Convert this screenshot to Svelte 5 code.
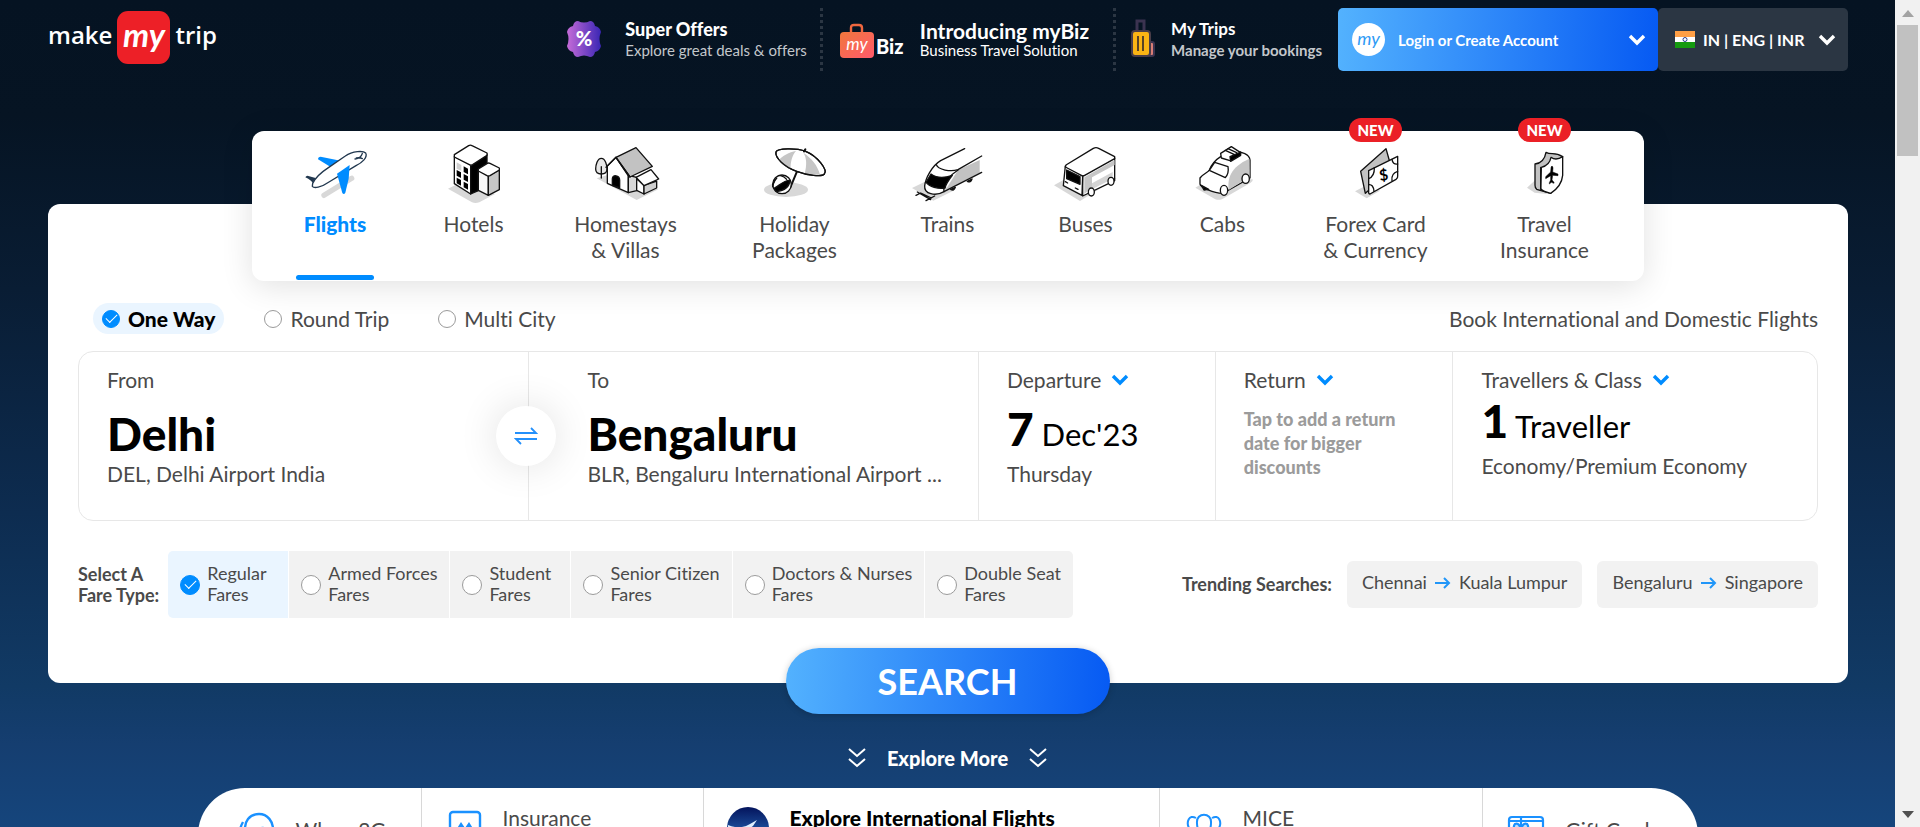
<script>
  let trip = $state('One Way');
  let fare = $state('Regular');
  let from = $state('Delhi');
  let to = $state('Bengaluru');

  const trips = ['One Way', 'Round Trip', 'Multi City'];
  const fares = ['Regular', 'Armed Forces', 'Student', 'Senior Citizen', 'Doctors & Nurses', 'Double Seat'];
  const trends = [['Chennai', 'Kuala Lumpur'], ['Bengaluru', 'Singapore']];
  const tabs = [
    { id: 'flights', lines: ['Flights'], box: '180 66 210 186', active: true },
    { id: 'hotels', lines: ['Hotels'], box: '597 66 210 186' },
    { id: 'homes', lines: ['Homestays', '& Villas'], box: '1053 66 210 186' },
    { id: 'holiday', lines: ['Holiday', 'Packages'], box: '180 66 210 186' },
    { id: 'trains', lines: ['Trains'], box: '639 66 210 186' },
    { id: 'buses', lines: ['Buses'], box: '1053 66 210 186' },
    { id: 'cabs', lines: ['Cabs'], box: '84 96 210 186' },
    { id: 'forex', lines: ['Forex Card', '& Currency'], box: '543 96 210 186', isNew: true },
    { id: 'insurance', lines: ['Travel', 'Insurance'], box: '1050 96 210 186', isNew: true }
  ];

  function swap() {
    [from, to] = [to, from];
  }
</script>

{#snippet chevron()}
  <svg class="chevron" viewBox="0 0 18 12" width="18" height="12" aria-hidden="true"><path d="M2 2l7 7 7-7" fill="none" stroke="currentColor" stroke-width="3.4" /></svg>
{/snippet}

{#snippet down()}
  <svg viewBox="0 0 20 20" width="20" height="20" aria-hidden="true"><path d="M2 1l8 7 8-7M2 11l8 7 8-7" fill="none" stroke="#fff" stroke-width="2" /></svg>
{/snippet}

{#snippet picture(id)}
  {#if id === 'flights'}
    <path d="M252 226L335 175" stroke="#d8d8d8" stroke-width="16" />
    <path d="M234 118q0-8 8-8l52 11 8 6-30 14z" fill="#008cff" stroke="none" />
    <path d="M196 172q3-6 9-4l30 8-14 17q-6-12-25-21z" fill="#22384f" stroke="none" />
    <path d="M218 190C228 170 242 158 262 145L316 108C338 92 370 92 377 99C384 112 366 128 348 137L262 189C244 202 222 206 217 199Z" fill="#fff" stroke="#22384f" />
    <path d="M345 117q18-2 22-17M349 114q12-2 18 2" fill="none" stroke="#22384f" />
    <path d="M291 161L329 135L326 176L316 218q-4 7-9 1z" fill="#008cff" stroke="none" />
  {:else if id === 'hotels'}
    <path d="M624 206L660 188L765 222L718 247q-12 4-22 0z" fill="#d8d8d8" stroke="none" />
    <path d="M643 110L692 135V222L643 191Z" fill="#fff" />
    <path d="M692 135L741 102V132L715 148V212L692 222Z" fill="#000" />
    <path d="M643 104L686 77q5-3 10 0L741 99v7L698 134q-5 3-10 0L643 111Z" fill="#fff" />
    <path d="M650 127l14 8v17l-14-6z" fill="#d0d0d0" stroke="none" />
    <path d="M671 139l13 7v17l-13-7zM650 150l13 7v17l-13-7zM671 162l13 7v17l-13-7zM650 173l13 7v17l-13-7zM671 185l13 7v17l-13-7z" fill="#000" stroke="none" />
    <path d="M715 150L745 168V226L715 211Z" fill="#f8f8f8" />
    <path d="M745 168L778 150V209L745 226Z" fill="#c6c6c6" />
    <path d="M715 147L742 130q4-2 8 0L778 144v6L750 167q-5 2-9 0L715 153Z" fill="#fff" />
  {:else if id === 'homes'}
    <path d="M1070 175L1100 166L1255 208L1190 240Z" fill="#d8d8d8" stroke="none" />
    <path d="M1084 115c-12 0-17 20-17 32 0 11 8 15 17 15s17-4 17-15c0-12-5-32-17-32z" fill="#e6e6e6" />
    <path d="M1084 140v34" />
    <path d="M1102 190V138L1128 112L1165 168V218Z" fill="#fff" />
    <path d="M1165 166L1190 172V212L1165 218Z" fill="#d8d8d8" />
    <path d="M1128 112L1188 83L1237 139L1170 171Z" fill="#c2c2c2" />
    <path d="M1098 142L1128 112L1170 171" fill="none" />
    <path d="M1117 196v-20c0-14 22-10 22 4v23z" fill="#000" />
    <path d="M1190 176L1212 196V222L1190 211Z" fill="#fff" />
    <path d="M1212 196L1250 183V204L1212 222Z" fill="#cfcfcf" />
    <path d="M1188 172L1233 149L1256 177L1212 197Z" fill="#fff" />
  {:else if id === 'holiday'}
    <ellipse cx="258" cy="209" rx="66" ry="22" fill="#d8d8d8" stroke="none" />
    <path d="M292 152L272 200" stroke-width="6" />
    <path d="M228 96C232 84 290 84 317 94C352 108 384 150 373 162C366 172 322 166 290 154C252 140 224 112 228 96Z" fill="#fff" />
    <path d="M236 121C246 108 268 96 288 93C276 106 271 128 272 147C257 140 244 131 236 121ZM310 98C334 114 353 136 360 164C344 165 328 163 314 160C321 136 320 112 310 98Z" fill="#c6c6c6" stroke="none" />
    <path d="M228 96C232 84 290 84 317 94C352 108 384 150 373 162C366 172 322 166 290 154C252 140 224 112 228 96Z" fill="none" />
    <path d="M312 94L316 88" stroke-width="6" />
    <circle cx="246" cy="193" r="28" fill="#fff" />
    <path d="M222 205C238 198 250 180 270 181C268 202 252 212 229 215ZM218 200q2-18 12-25" fill="#000" />
    <path d="M240 166q14 4 20 12" fill="none" />
  {:else if id === 'trains'}
    <path d="M636 204L690 178L760 212L700 242Z" fill="#d8d8d8" stroke="none" />
    <path d="M648 226l14-7M664 220l30 14M678 242l26-14M652 216l40 23" />
    <path d="M774 150L839 120V158L734 214Z" fill="#c2c2c2" stroke="none" />
    <path d="M794 86L722 122C695 138 676 176 674 198C672 222 706 230 732 215C728 190 752 164 774 150" fill="#fff" />
    <path d="M693 162C712 176 740 172 757 166C746 180 738 192 735 204C714 208 688 200 678 187Z" fill="#000" />
    <path d="M709 134C714 150 752 156 774 149L845 108M732 215L845 157" fill="none" />
    <path d="M752 208q10 6 14-6zM802 184q10 5 14-7z" fill="#000" />
  {:else if id === 'buses'}
    <path d="M1062 196L1090 180L1250 175L1140 243Z" fill="#d8d8d8" stroke="none" />
    <path d="M1148 168L1244 114V182L1148 228Z" fill="#fff" />
    <path d="M1153 172L1244 120V135L1176 172V200L1153 222Z" fill="#c6c6c6" stroke="none" />
    <path d="M1176 190L1238 156V176L1176 208Z" fill="#d4d4d4" stroke="none" />
    <path d="M1096 138L1148 168L1146 226L1090 197Z" fill="#fff" />
    <path d="M1100 150L1140 170V193L1100 176Z" fill="#000" />
    <path d="M1098 135L1180 85q8-4 16 0L1244 110v6L1154 166q-5 3-10 0L1096 141Z" fill="#fff" />
    <path d="M1096 185l7 4M1126 204l8 4" />
    <ellipse cx="1174" cy="216" rx="9" ry="12" fill="#fff" /><ellipse cx="1233" cy="184" rx="9" ry="12" fill="#fff" />
  {:else if id === 'cabs'}
    <path d="M106 233L140 212L278 208q2 6-6 10L186 268q-10 3-20 0z" fill="#d8d8d8" stroke="none" />
    <path d="M120 204C130 190 144 188 148 180C154 166 166 150 182 140L210 124C240 124 268 130 270 150V204L188 250C160 250 122 232 120 222Z" fill="#fff" />
    <path d="M206 240C202 206 210 172 268 146L269 200Z" fill="#c6c6c6" stroke="none" />
    <path d="M148 181L164 157L204 170C206 182 204 194 196 203Z" fill="#fff" />
    <path d="M182 130L214 110L242 128L210 152L184 144Z" fill="#fff" />
    <path d="M210 140L242 126V136L212 154ZM196 121l26 12M204 116l26 12" fill="#000" />
    <path d="M124 226l22 12-14 2z" fill="#000" />
    <ellipse cx="192" cy="241" rx="11" ry="15" fill="#fff" /><ellipse cx="257" cy="206" rx="11" ry="14" fill="#fff" />
  {:else if id === 'forex'}
    <path d="M585 244L620 226L660 242L620 265Z" fill="#d8d8d8" stroke="none" />
    <path d="M602 184L678 116L696 180L616 250Z" fill="#c2c2c2" />
    <path d="M626 182L713 139V198Q714 204 708 208L630 252Q625 252 626 245Z" fill="#fff" />
    <path d="M626 206q18-8 17-33M696 148q2 16 17 14M626 224q14-2 16 20M713 184q-20 6-17 28" fill="none" />
    <text x="671" y="211" font-size="46" font-weight="700" text-anchor="middle" fill="#000" stroke="none" transform="rotate(-8 671 195)">$</text>
  {:else}
    <path d="M1101 233L1126 210L1180 236L1160 252L1124 248Z" fill="#d8d8d8" stroke="none" />
    <path d="M1125 162C1142 160 1154 150 1158 127C1174 136 1184 124 1208 140L1172 250L1130 238Q1125 234 1125 226Z" fill="#c2c2c2" />
    <path d="M1144 172C1160 168 1170 158 1173 142C1184 150 1196 148 1208 140V196C1206 218 1190 238 1172 250C1156 246 1144 240 1142 236Z" fill="#fff" />
    <path d="M1142 172V238" />
    <path d="M1174 170q5-4 5 4l-1 12 16 6v5l-16-1-2 14 6 7v3l-8-3-6 5v-4l4-8v-13l-15 9v-6l15-14 1-12q0-3 1-4z" fill="#000" stroke="#000" stroke-width="1.5" />
  {/if}
{/snippet}

<div class="window">
  <div class="page">
    <header class="wrap top">
      <a class="logo" href="#home" aria-label="makemytrip">
        <span>make</span><b>my</b><span>trip</span>
      </a>
      <div class="links">
        <a class="promo offers" href="#offers">
          <svg viewBox="0 0 36 38" width="36" height="38" aria-hidden="true">
            <defs><linearGradient id="violet"><stop stop-color="#c56bd8" /><stop offset="1" stop-color="#3a26b4" /></linearGradient></defs>
            <path d="M12 1q6 3 12 0 4 0 5 5 5 1 6 6-3 7 0 14-1 5-6 6-1 5-5 5-6-3-12 0-4 0-5-5-5-1-6-6 3-7 0-14 1-5 6-6 1-5 5-5z" fill="url(#violet)" />
            <text x="18" y="26" font-size="20" font-weight="900" text-anchor="middle" fill="#fff">%</text>
          </svg>
          <span><strong>Super Offers</strong><small>Explore great deals &amp; offers</small></span>
        </a>
        <a class="promo biz" href="#mybiz">
          <svg viewBox="0 0 66 36" width="66" height="36" aria-hidden="true">
            <defs><linearGradient id="coral" x2="1" y2="1"><stop stop-color="#f0773c" /><stop offset="1" stop-color="#ff5a6c" /></linearGradient></defs>
            <path d="M12 10V5q0-3 3-3h5q3 0 3 3v5" fill="none" stroke="#f0673f" stroke-width="2.4" />
            <rect x="1" y="9" width="34" height="26" rx="4" fill="url(#coral)" />
            <text x="18" y="27" font-size="17" font-style="italic" text-anchor="middle" fill="#fff">my</text>
            <text x="37" y="31" font-size="20" font-weight="900" fill="#fff">Biz</text>
          </svg>
          <span><strong>Introducing myBiz</strong><small>Business Travel Solution</small></span>
        </a>
        <a class="promo trips" href="#trips">
          <svg viewBox="0 0 26 40" width="26" height="40" aria-hidden="true">
            <path d="M7 12V2h7v10" fill="none" stroke="#3b3350" stroke-width="3" />
            <rect x="18" y="23" width="6" height="14" rx="2" fill="#d97d75" stroke="#3b3350" stroke-width="2" />
            <rect x="2" y="12" width="18" height="25" rx="3" fill="#fbb414" stroke="#4a3d48" stroke-width="2" />
            <path d="M8 17v15M13 17v15" stroke="#5a4325" stroke-width="2" />
          </svg>
          <span><strong>My Trips</strong><small>Manage your bookings</small></span>
        </a>
        <button class="login"><i>my</i><span>Login or Create Account</span>{@render chevron()}</button>
        <button class="locale">
          <svg viewBox="0 0 20 17" width="20" height="17" aria-hidden="true"><path d="M0 0h20v17H0z" fill="#fff" /><path d="M0 0h20v6H0z" fill="#ff9f45" /><path d="M0 11h20v6H0z" fill="#159a10" /><circle cx="10" cy="8.500" r="2" fill="none" stroke="#253a8e" /></svg>
          <span>IN | ENG | INR</span>{@render chevron()}
        </button>
      </div>
    </header>

    <nav class="tabs" aria-label="Services">
      {#each tabs as tab}
        <a class="tab" class:active={tab.active} href={'#' + tab.id}>
          {#if tab.isNew}<em>NEW</em>{/if}
          <svg class="pic" viewBox={tab.box} width="70" height="62" aria-hidden="true">{@render picture(tab.id)}</svg>
          {#each tab.lines as line}<span>{line}</span>{/each}
        </a>
      {/each}
    </nav>

    <main class="wrap card">
      <div class="trip-row">
        <div class="trips-set">
          {#each trips as name}
            <label class="trip" class:on={trip === name}><input type="radio" name="trip" value={name} bind:group={trip} />{name}</label>
          {/each}
        </div>
        <p>Book International and Domestic Flights</p>
      </div>

      <div class="fields">
        <div class="field city">
          <label for="from">From</label>
          <input id="from" type="text" bind:value={from} />
          <p>DEL, Delhi Airport India</p>
          <button class="swap" aria-label="Swap cities" onclick={swap}>
            <svg viewBox="0 0 24 18" width="24" height="18" aria-hidden="true"><path d="M1 6h21l-5-5M23 12H2l5 5" fill="none" stroke="#2490fb" stroke-width="1.8" /></svg>
          </button>
        </div>
        <div class="field city second">
          <label for="to">To</label>
          <input id="to" type="text" bind:value={to} />
          <p>BLR, Bengaluru International Airport ...</p>
        </div>
        <button class="field">
          <span class="name">Departure {@render chevron()}</span>
          <span class="value"><b>7</b> Dec'23</span>
          <span>Thursday</span>
        </button>
        <button class="field">
          <span class="name">Return {@render chevron()}</span>
          <span class="hint">Tap to add a return date for bigger discounts</span>
        </button>
        <button class="field guests">
          <span class="name">Travellers &amp; Class {@render chevron()}</span>
          <span class="value"><b>1</b> Traveller</span>
          <span>Economy/Premium Economy</span>
        </button>
      </div>

      <div class="fare-row">
        <strong>Select A<br />Fare Type:</strong>
        <div class="fares">
          {#each fares as name}
            <label class:on={fare === name}><input type="radio" name="fare" value={name} bind:group={fare} /><span>{name}<br />Fares</span></label>
          {/each}
        </div>
        <div class="trend">
          <strong>Trending Searches:</strong>
          {#each trends as pair}
            <a href="#search">{pair[0]}
              <svg viewBox="0 0 16 12" width="16" height="12" aria-hidden="true"><path d="M0 6h14M9 1l5 5-5 5" fill="none" stroke="#2196f8" stroke-width="2" /></svg>
              {pair[1]}</a>
          {/each}
        </div>
      </div>
    </main>

    <button class="search">SEARCH</button>

    <div class="more">{@render down()}<span>Explore More</span>{@render down()}</div>

    <div class="bar">
      <a class="mid" href="#where2go">
        <svg viewBox="0 0 38 38" width="38" height="38" fill="none" stroke="#1a91ff" stroke-width="2.400" aria-hidden="true"><path d="M6 10Q0 20 5 34M9 24C5 8 14 2 22 2S37 9 36 20 28 37 21 36 10 30 9 24zM20 18q6-4 11 0" /></svg>
        <span>Where2Go</span>
      </a>
      <a href="#insurance">
        <svg viewBox="0 0 34 38" width="34" height="38" fill="none" stroke="#1a91ff" stroke-width="2.400" aria-hidden="true"><rect x="2" y="2" width="30" height="34" rx="3" /><path d="M8 20l5-8 4 6 4-6 5 8v6H8z" fill="#1a91ff" stroke="none" /></svg>
        <span>Insurance</span>
      </a>
      <a class="strong" href="#international">
        <svg viewBox="0 0 42 42" width="42" height="42" aria-hidden="true"><defs><linearGradient id="sky" x2="0" y2="1"><stop stop-color="#04145c" /><stop offset="1" stop-color="#2f7fd0" /></linearGradient></defs><circle cx="21" cy="21" r="21" fill="url(#sky)" /><path d="M1 18q12 5 22-1l7-4-4 6Q14 28 1 27z" fill="#dfefff" /></svg>
        <span>Explore International Flights</span>
      </a>
      <a href="#mice">
        <svg viewBox="0 0 36 34" width="36" height="34" fill="none" stroke="#1a91ff" stroke-width="2" aria-hidden="true"><path d="M11 13C10 2 26 2 25 13q0 6-3 9v6H14v-6q-3-3-3-9zM10 8C3 4 0 12 3 18v4l-3 5h11M26 8c7-4 10 4 7 10v4l3 5H25" /></svg>
        <span>MICE</span>
      </a>
      <a class="mid" href="#gift">
        <svg viewBox="0 0 38 30" width="38" height="30" fill="#fff" stroke="#1a91ff" stroke-width="2.200" aria-hidden="true"><rect x="2" y="2" width="34" height="26" rx="3" /><path d="M2 6h34M14 2v26M2 18h34" /><path d="M14 17Q4 14 8 9q5-2 6 8 1-10 6-8 4 5-6 8z" fill="#bfe0ff" /></svg>
        <span>Gift Cards</span>
      </a>
    </div>
  </div>

  <div class="scroll" aria-hidden="true">
    <svg viewBox="0 0 12 8" width="12" height="8"><path d="M0 8l6-7 6 7z" fill="#a3a3a3" /></svg>
    <div class="thumb"></div>
    <svg viewBox="0 0 12 8" width="12" height="8"><path d="M0 0l6 7 6-7z" fill="#505050" /></svg>
  </div>
</div>

<style>
  :global(body) { margin: 0; overflow: hidden; }
  * { box-sizing: border-box; }
  .window {
    display: grid;
    grid-template-columns: 1fr 25px;
    height: 100vh;
    overflow: hidden;
    font-family: Lato, "Open Sans", sans-serif;
    font-size: 21px;
    line-height: 26px;
    font-variant-ligatures: none;
    color: #4a4a4a;
  }
  button, input { font: inherit; color: inherit; border: 0; background: none; padding: 0; margin: 0; }
  button { cursor: pointer; text-align: left; }
  a { color: inherit; text-decoration: none; }
  p { margin: 0; }
  .page {
    min-width: 0;
    overflow: hidden;
    display: flex;
    flex-direction: column;
    background: linear-gradient(#051322, #061423 14%, #091d34 35%, #0d2c50 62%, #113a65 83%, #153e70 90%, #15457c);
  }
  .wrap { margin: 0 47px 0 48px; flex: none; }

  .top { display: flex; justify-content: space-between; padding-top: 8px; height: 71px; color: #fff; }
  .logo { display: flex; align-items: center; gap: 5px; height: 58px; font: 600 24px/36px "Open Sans", sans-serif; }
  .logo span { padding-bottom: 4px; }
  .logo b {
    width: 53px;
    height: 53px;
    border-radius: 11px;
    background: #ed2027;
    font: italic 700 33px/46px Lato, sans-serif;
    text-align: center;
  }
  .links { display: flex; height: 63px; }
  .promo { display: flex; align-items: center; padding-bottom: 2px; }
  .promo span { display: flex; flex-direction: column; }
  .promo strong { font-size: 18px; line-height: 22px; font-weight: 900; }
  .promo small { font-size: 15px; line-height: 20px; color: #c3c7cb; }
  .offers { gap: 23px; padding-right: 13px; }
  .biz { gap: 15px; padding: 2px 24px 0 16px; border: 3px none #2b3643; border-style: none dotted; }
  .biz strong { font-size: 21px; font-weight: 700; line-height: 18px; }
  .biz small { color: #fff; }
  .trips { gap: 15px; padding: 0 16px 2px 14px; }
  .trips strong { font-size: 17px; font-weight: 700; }
  .trips small { font-weight: 700; }
  .login, .locale { display: flex; align-items: center; border-radius: 5px; font-weight: 700; color: #fff; }
  .login { width: 320px; padding: 0 12px 0 14px; gap: 13px; font-size: 15px; background: linear-gradient(93deg, #53b2fe, #065af3); }
  .login i { width: 33px; height: 33px; border-radius: 50%; background: #fff; color: #2f9bf5; text-align: center; font-size: 18px; font-weight: 400; line-height: 30px; }
  .login span { flex: 1; }
  .locale { width: 190px; padding: 0 12px 0 17px; gap: 8px; font-size: 16px; background: #2b3643; }
  .locale span { flex: 1; white-space: nowrap; }

  .tabs {
    position: relative;
    z-index: 2;
    flex: none;
    align-self: center;
    width: 1392px;
    max-width: 96%;
    height: 150px;
    margin: 60px 0 -77px;
    padding: 11px 18px 0 15px;
    display: grid;
    grid-template-columns: 137fr 140fr 164fr 174fr 132fr 144fr 130fr 176fr 162fr;
    background: #fff;
    border-radius: 12px;
    box-shadow: 0 5px 32px rgba(0, 0, 0, .12);
  }
  .tab { position: relative; display: flex; flex-direction: column; align-items: center; }
  .pic { margin-bottom: 7px; overflow: visible; stroke: #111; stroke-width: 4; stroke-linecap: round; stroke-linejoin: round; }
  .tab.active { color: #008cff; font-weight: 900; }
  .tab.active::after { content: ""; position: absolute; bottom: 1px; width: 78px; height: 5px; border-radius: 3px; background: #008cff; }
  .tab em {
    position: absolute;
    top: -24px;
    width: 53px;
    height: 24px;
    border-radius: 12px;
    background: #eb2026;
    color: #fff;
    font: 900 15px/24px Lato, sans-serif;
    text-align: center;
  }

  .card { background: #fff; border-radius: 12px; padding: 99px 30px 65px; }
  .trip-row { display: flex; justify-content: space-between; align-items: center; height: 31px; }
  .trips-set { display: flex; gap: 31px; margin-left: 15px; }
  .trip { display: flex; align-items: center; gap: 8px; height: 31px; padding: 0 9px; border-radius: 16px; }
  .trip.on { background: #eaf5ff; color: #000; font-weight: 900; }
  input[type="radio"] { appearance: none; flex: none; width: 18px; height: 18px; border: 1px solid #9b9b9b; border-radius: 50%; background: #fff; }
  input[type="radio"]:checked { border-color: #008cff; background: #008cff; display: grid; place-items: center; }
  input[type="radio"]:checked::before { content: ""; width: 10px; height: 5px; border: solid #fff; border-width: 0 0 1px 1px; rotate: -45deg; margin-bottom: 3px; }

  .fields {
    display: grid;
    grid-template-columns: 450fr 450fr 237fr 238fr 365fr;
    height: 170px;
    margin-top: 17px;
    border: 1px solid #e7e7e7;
    border-radius: 15px;
  }
  .field { position: relative; min-width: 0; display: flex; flex-direction: column; justify-content: flex-start; padding: 15px 28px 0; border-left: 1px solid #e7e7e7; }
  .field:first-child { border: 0; }
  .second { padding-left: 58px; }
  .field p { white-space: nowrap; }
  .city input { width: 100%; height: 54px; margin-top: 14px; font-size: 46px; font-weight: 900; color: #000; line-height: 54px; outline: 0; }
  .swap {
    position: absolute;
    z-index: 1;
    right: -28px;
    top: 54px;
    width: 60px;
    height: 60px;
    display: grid;
    place-items: center;
    border-radius: 50%;
    background: #fff;
    box-shadow: 0 0 40px rgba(0, 0, 0, .12);
  }
  .name { display: flex; align-items: center; gap: 10px; }
  .name .chevron { color: #008cff; }
  .value { margin: 9px 0 6px; font-size: 31px; line-height: 54px; height: 53px; color: #000; }
  .value b { font-size: 46px; font-weight: 900; }
  .guests .value { margin-top: 1px; }
  .hint { margin-top: 14px; max-width: 165px; font-size: 18px; font-weight: 900; line-height: 24px; color: #9b9b9b; }

  .fare-row { display: flex; align-items: center; height: 67px; margin-top: 30px; font-size: 18px; line-height: 21px; white-space: nowrap; }
  .fares { display: flex; gap: 1px; height: 67px; margin-left: 9px; border-radius: 5px; overflow: hidden; }
  .fares label { display: flex; align-items: center; gap: 7px; min-width: 120px; padding: 0 12px; background: #f2f2f2; }
  .fares label.on { background: #eaf5ff; }
  .fares span { padding-bottom: 2px; }
  .fares input[type="radio"] { width: 20px; height: 20px; }
  .trend { display: flex; align-items: center; gap: 15px; margin-left: auto; }
  .trend a { display: flex; align-items: center; gap: 8px; height: 47px; padding: 0 15px 4px; border-radius: 6px; background: #f2f2f2; }

  .search {
    position: relative;
    flex: none;
    align-self: center;
    width: 324px;
    height: 66px;
    margin-top: -35px;
    border-radius: 33px;
    background: linear-gradient(93deg, #53b2fe, #065af3);
    box-shadow: 0 1px 7px rgba(0, 0, 0, .2);
    color: #fff;
    font-size: 36px;
    font-weight: 700;
    text-align: center;
  }
  .more { flex: none; display: flex; justify-content: center; align-items: center; gap: 20px; height: 26px; margin: 31px 0 17px; color: #fff; font-size: 20px; font-weight: 900; }

  .bar {
    flex: none;
    align-self: center;
    width: 1500px;
    max-width: 96%;
    height: 94px;
    display: grid;
    grid-template-columns: 223fr 282fr 456fr 323fr 216fr;
    border-radius: 47px;
    background: #fff;
    white-space: nowrap;
  }
  .bar a { min-width: 0; display: flex; align-items: flex-start; gap: 21px; padding: 17px 0 0 26px; border-left: 1px solid #d8d8d8; }
  .bar a > svg { flex: none; margin-top: 5px; }
  .bar a:first-child { border: 0; padding-left: 39px; }
  .bar .mid span { margin-top: 12px; }
  .bar .mid svg { margin-top: 7px; }
  .bar .mid:last-child { padding-left: 24px; }
  .bar .mid:last-child svg { margin-top: 10px; }
  .bar .strong { color: #000; font-weight: 900; padding-left: 23px; }
  .bar .strong svg { margin-top: 2px; }

  .scroll { display: flex; flex-direction: column; align-items: center; padding: 9px 0 8px; background: #f1f1f1; }
  .scroll .thumb { width: 21px; height: 131px; margin: 8px 0 auto; background: #c1c1c1; }
</style>
